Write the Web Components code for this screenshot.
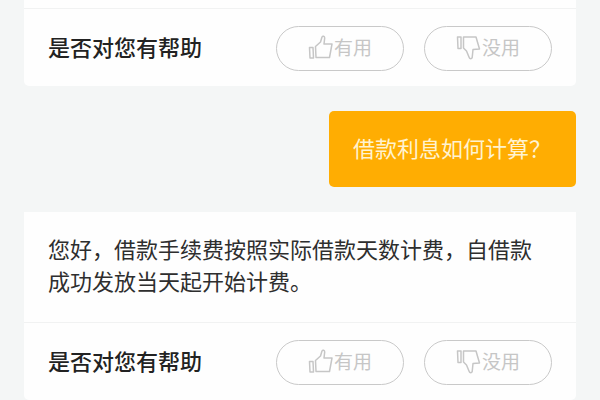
<!DOCTYPE html>
<html lang="zh-CN">
<head>
<meta charset="UTF-8">
<meta name="viewport" content="width=device-width, initial-scale=1.0">
<title>在线客服</title>
<style>
  body {
    margin: 0;
    background: #f4f6f6;
    color: #2e2e2e;
    font-family: "Noto Sans CJK SC", sans-serif;
    font-size: 22px;
    line-height: 32px;
  }
</style>
</head>
<body>
<chat-thread>
  <answer-card continued></answer-card>
  <user-message>借款利息如何计算？</user-message>
  <answer-card>您好，借款手续费按照实际借款天数计费，自借款成功发放当天起开始计费。</answer-card>
</chat-thread>

<script>
class ChatThread extends HTMLElement {
  connectedCallback() {
    this.attachShadow({ mode: 'open' });
    this.shadowRoot.innerHTML = `
      <style>
        :host {
          display: block;
        }
        main {
          display: flex;
          flex-direction: column;
          gap: 25px;
          padding: 0 24px;
        }
      </style>
      <main><slot></slot></main>
    `;
  }
}
customElements.define('chat-thread', ChatThread);

class UserMessage extends HTMLElement {
  connectedCallback() {
    this.attachShadow({ mode: 'open' });
    this.shadowRoot.innerHTML = `
      <style>
        :host {
          display: block;
          align-self: flex-end;
          max-width: 80%;
          box-sizing: border-box;
          padding: 20px 25px 24px 24px;
          border-radius: 5px;
          background: #ffad02;
          color: #fff3d0;
        }
      </style>
      <slot></slot>
    `;
  }
}
customElements.define('user-message', UserMessage);

class VoteButton extends HTMLElement {
  connectedCallback() {
    // the two thumbs are drawn separately, the cuff is always on the left
    const icons = {
      up: `
        <path d="M1.500 13.500h3.500l.5 10.500H2z"/>
        <path d="M7.500 12.500l5-4.500L14 3c.8-1.500 2.700-.8 2.700 1L16 10h8l-2.500 13.500H8z"/>`,
      down: `
        <path d="M1.500 3h3.500v11.500H2z"/>
        <path d="M7.500 3H20l3.500 12-6.500.5-.8 8c-.5 1.500-2.500 1.500-3 0L10.500 17l-3-3z"/>`
    };
    this.attachShadow({ mode: 'open' });
    this.shadowRoot.innerHTML = `
      <style>
        :host {
          display: block;
        }
        button {
          display: flex;
          align-items: center;
          justify-content: center;
          gap: 1px;
          width: 128px;
          height: 45px;
          padding: 0 0 3px;
          border: 1px solid #c9c9c9;
          border-radius: 23px;
          background: transparent;
          color: #c6c6c6;
          font-family: inherit;
          font-size: 19px;
          line-height: 24px;
          cursor: pointer;
        }
        svg {
          width: 25px;
          height: 26px;
          fill: none;
          stroke: #c6c6c6;
          stroke-width: 1.5;
          stroke-linejoin: round;
          stroke-linecap: round;
        }
      </style>
      <button type="button">
        <svg viewBox="0 0 25 26" aria-hidden="true">${icons[this.getAttribute('icon')]}</svg>
        <span><slot></slot></span>
      </button>
    `;
  }
}
customElements.define('vote-button', VoteButton);

class AnswerCard extends HTMLElement {
  connectedCallback() {
    this.attachShadow({ mode: 'open' });
    this.shadowRoot.innerHTML = `
      <style>
        :host {
          display: block;
          border-radius: 0 0 5px 5px;
          background: #fefefe;
        }
        .answer {
          padding: 20px 24px 26px;
        }
        /* the answer itself is scrolled away, only its lower edge is left */
        :host([continued]) .answer {
          padding: 8px 0 0;
        }
        .feedback {
          display: flex;
          align-items: center;
          justify-content: space-between;
          flex-wrap: wrap;
          gap: 12px;
          padding: 17px 24px 15px;
          border-top: 1px solid #f1f2f2;
        }
        .question {
          padding-bottom: 5px;
          font-weight: 500;
          color: #222;
        }
        .votes {
          display: flex;
          gap: 20px;
        }
      </style>
      <div class="answer"><slot></slot></div>
      <div class="feedback">
        <span class="question">是否对您有帮助</span>
        <div class="votes">
          <vote-button icon="up">有用</vote-button>
          <vote-button icon="down">没用</vote-button>
        </div>
      </div>
    `;
  }
}
customElements.define('answer-card', AnswerCard);
</script>
</body>
</html>
